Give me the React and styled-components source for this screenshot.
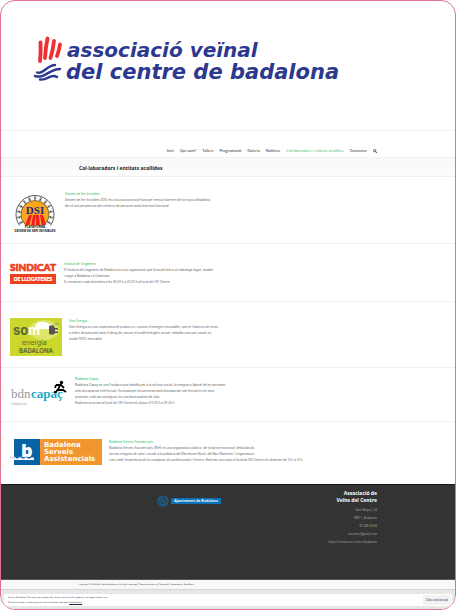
import React from "react";
import styled, { createGlobalStyle } from "styled-components";

const body = 'Inter, "Open Sans", sans-serif';
const sans = '"Open Sans", "Noto Sans", sans-serif';
const compact = 'Lato, "Open Sans", sans-serif';
const small = '"DejaVu Sans", sans-serif';

const GlobalStyle = createGlobalStyle`
  * { box-sizing: border-box; }
  body { margin: 0; background: #fff; font-family: ${sans}; }
  a { color: inherit; text-decoration: none; }
  h1, h2, h3, p, ul { margin: 0; padding: 0; }
  svg { display: block; }
`;

const Frame = styled.div`
  display: flex;
  flex-direction: column;
  min-height: 100vh;
  border: 1px solid #dc728b;
  border-radius: 15px;
  overflow: hidden;
  background: #fff;
`;

const Banner = styled.header`
  padding: 32px 30px 40px;
  border-bottom: 1px solid #f1f1f1;
`;

const BannerLogo = styled.svg`
  width: 320px;
  height: 57px;
  overflow: visible;
`;

const Container = styled.div`
  width: 100%;
  max-width: 298px;
  margin: 0 auto;
`;

const NavBar = styled.nav`
  padding: 17px 0 3px;
`;

const NavList = styled.ul`
  display: flex;
  justify-content: flex-end;
  align-items: center;
  gap: 6px;
  list-style: none;
  font-family: ${compact};
  font-size: 4px;
  line-height: 6px;
  white-space: nowrap;
`;

const NavLink = styled.a`
  display: block;
  color: ${(p) => (p.$active ? "#4fc986" : "#333")};
`;

const SearchButton = styled.button`
  display: block;
  padding: 0;
  border: 0;
  background: none;
  width: 4px;
  height: 4px;
`;

const TitleBar = styled.div`
  padding: 7px 0 4px;
  border-top: 1px solid #f2f2f2;
  border-bottom: 1px solid #eee;
  background: linear-gradient(#f8f8f8, #fdfdfd);
`;

const PageTitle = styled.h1`
  font-size: 5px;
  line-height: 7px;
  color: #222;
`;

const Entry = styled.article`
  display: flex;
  align-items: flex-start;
  gap: ${(p) => p.$gap}px;
  min-height: ${(p) => p.$height}px;
  padding: ${(p) => p.$top}px 9px 0 ${(p) => p.$left ?? 9}px;
  border-bottom: ${(p) => (p.$last ? "0" : "1px solid #f0f0f0")};
`;

const EntryLogo = styled.svg`
  flex: none;
  margin-top: ${(p) => p.$drop}px;
  overflow: visible;
`;

const EntryText = styled.div`
  font-family: ${body};
  font-size: 3px;
  line-height: 6px;
  color: #666;
  white-space: nowrap;
`;

const EntryTitle = styled.h2`
  font-size: 3px;
  line-height: 6px;
  font-weight: 400;
  color: #1fc067;
`;

const Footer = styled.footer`
  flex: 1;
  background: #333;
  border-top: 1px solid #161616;
  border-bottom: 1px solid #555;
`;

const FooterColumns = styled(Container)`
  display: flex;
  justify-content: space-between;
  padding-top: 5px;
`;

const CityLink = styled.a`
  display: flex;
  align-items: center;
  gap: 2px;
  height: 12px;
  margin: 5px 0 0 78px;
`;

const CityLabel = styled.span`
  padding: 0 3px;
  background: #0b74b8;
  color: #fff;
  font-family: ${compact};
  font-size: 4px;
  line-height: 6px;
  font-weight: 700;
  white-space: nowrap;
`;

const Address = styled.address`
  font-style: normal;
  text-align: right;
  font-size: 3px;
  line-height: 8px;
  color: #aaa;
`;

const FooterTitle = styled.h3`
  margin-bottom: 2px;
  font-size: 5px;
  line-height: 7px;
  color: #fff;
`;

const Copyright = styled.div`
  padding: 1px 0 2px;
  background: #f8f8f8;
  font-family: ${small};
  font-size: 2px;
  line-height: 6px;
  color: #333;
`;

const CookieArea = styled.aside`
  padding: 4px 3px 3px;
  border-top: 1px solid #d5d8d7;
  background: #e6e8e8;
`;

const CookieBox = styled.div`
  display: flex;
  align-items: center;
  justify-content: space-between;
  padding: 1px 1px 1px 4px;
  background: #fff;
  font-family: ${small};
  font-size: 2px;
  line-height: 5px;
  color: #224;
`;

const CookieLink = styled.a`
  text-decoration: underline;
`;

const AcceptButton = styled.button`
  padding: 0 3px;
  height: 10px;
  border: 0;
  border-radius: 1px;
  background: #f2f2f2;
  color: #345;
  font-family: ${compact};
  font-size: 3px;
  white-space: nowrap;
`;

function AssociationLogo() {
  return (
    <BannerLogo viewBox="31 33 320 57" role="img" aria-label="Associació Veïnal del Centre de Badalona">
      <g fill="none" stroke="#ee3035" strokeWidth="3.8" strokeLinecap="round">
        <path d="M40.5 42.500Q41 51 40 61" />
        <path d="M47.500 38.500Q45.500 48 45 58" />
        <path d="M54 41Q53 50 50.500 58" />
        <path d="M60 44.500Q59 51 57 56" />
      </g>
      <g fill="none" stroke="#2c398f" strokeWidth="2.400" strokeLinecap="round">
        <path d="M37 72.500C43 75 47 65 55 65" />
        <path d="M35 76C45 79 49 69 60 69" />
        <path d="M40 79.500C47 81 51 73 57 77" />
      </g>
      <g fill="#2c398f" fontFamily='"DejaVu Sans", sans-serif' fontStyle="italic" fontWeight="700">
        <text x="67" y="57" fontSize="20">associació veïnal</text>
        <text x="66" y="79" fontSize="21">del centre de badalona</text>
      </g>
    </BannerLogo>
  );
}

function DsiLogo() {
  const figures = Array.from({ length: 13 }, (_, i) => 150 + i * 20);
  return (
    <EntryLogo $drop={4} width="42" height="40" viewBox="0 0 42 40" role="img" aria-label="Plataforma Deixem de Ser Invisibles">
      <circle cx="21" cy="19.500" r="19" fill="#fff" stroke="#333" strokeWidth="0.8" />
      <g stroke="#333" strokeWidth="0.6" fill="none">
        {figures.map((a) => (
          <g key={a} transform={`rotate(${a + 90} 21 19.5) translate(21 2.3)`}>
            <circle r="0.7" />
            <path d="M0 0.800V2.400L-0.900 3.200M0 2.400L0.900 3.200M-1.200 1.500H1.200" />
          </g>
        ))}
      </g>
      <circle cx="21" cy="19.500" r="14" fill="#fba71c" stroke="#333" strokeWidth="0.6" />
      <path d="M11 30L15 20H18L15 32ZM17 32L19 20H22L20 33ZM22 33V20H25L26 32ZM28 32L26 20H29L32 30Z" fill="#e22" />
      <path d="M4 30.500H38V40H4Z" fill="#fff" />
      <text x="21" y="19" textAnchor="middle" fontFamily="Liberation Serif, serif" fontWeight="700" fontSize="11" fill="#202c8a">DSI</text>
      <g textAnchor="middle" fontFamily="Liberation Sans, sans-serif" fontWeight="700" fill="#111">
        <text x="21" y="33" fontSize="3">PLATAFORMA</text>
        <text x="21" y="37" fontSize="3">DEIXEM DE SER INVISIBLES</text>
      </g>
    </EntryLogo>
  );
}

function SindicatLogo() {
  return (
    <EntryLogo $drop={0} width="46" height="23" viewBox="0 0 46 23" role="img" aria-label="Sindicat de Llogateres">
      <path d="M0 13H46V23H0Z" fill="#ed401c" />
      <g textAnchor="middle" fontFamily="Lato, sans-serif" fontWeight="900">
        <text x="23" y="10" fontSize="10" fill="#ed401c" stroke="#ed401c" strokeWidth="0.7">SINDICAT</text>
        <text x="23" y="20" fontSize="5" fill="#fff" stroke="#fff" strokeWidth="0.2">DE LLOGATERES</text>
      </g>
    </EntryLogo>
  );
}

function SomEnergiaLogo() {
  return (
    <EntryLogo $drop={0} width="52" height="38" viewBox="0 0 52 38" role="img" aria-label="Som Energia Badalona">
      <path d="M0 0H52V38H0Z" fill="#cbd72b" />
      <ellipse cx="34" cy="12" rx="15" ry="10" fill="#dde66a" />
      <path d="M25 8Q27 3 35 4L42 7V12Q34 10 25 12Z" fill="#fff" />
      <path d="M39 8Q44 6 45 10L48 10V11.500H45V13.500H48V15H45Q44 18 39 16Z" fill="#555" />
      <path d="M43 8Q45 5 49 6" fill="none" stroke="#666" strokeWidth="0.6" />
      <g fontFamily="Inter, sans-serif" fill="#62673a">
        <text x="3" y="17" fontSize="13" fontWeight="700">
          so<tspan fill="#fff">m</tspan>
        </text>
        <text x="12" y="27" fontSize="7">energia</text>
        <text x="26" y="35" fontSize="6" fontWeight="700" textAnchor="middle">BADALONA</text>
      </g>
    </EntryLogo>
  );
}

function CapacLogo() {
  return (
    <EntryLogo $drop={5} width="57" height="24" viewBox="0 0 57 24" role="img" aria-label="Fundació bdn capaç">
      <g fontFamily="Liberation Serif, serif" fontSize="13">
        <text x="1" y="17" fill="#999">bdn</text>
        <text x="21" y="17" fontWeight="700" fill="#24a9c2">capaç</text>
      </g>
      <text x="1" y="24" fontFamily="DejaVu Sans, sans-serif" fontSize="3" fill="#999">FUNDACIÓ</text>
      <circle cx="51.500" cy="1.500" r="1.700" fill="#000" />
      <path d="M46 4L51 4L54 7M50 4L48 9L53 9L56 11M48 8L46 11H44M46 4L45 7" fill="none" stroke="#000" strokeWidth="1.800" />
    </EntryLogo>
  );
}

function BsaLogo() {
  return (
    <EntryLogo $drop={0} width="92" height="26" viewBox="0 0 92 26" role="img" aria-label="Badalona Serveis Assistencials">
      <path d="M4 0H30V26H4Z" fill="#0763a3" />
      <path d="M30 0H92V26H30Z" fill="#f29630" />
      <text x="11" y="18" fontFamily="Open Sans, sans-serif" fontWeight="800" fontSize="18" fill="#fff">b</text>
      <path d="M4 18Q7 21 10 18Q13 21 16 18Q19 21 22 18L24 19V21H4Z" fill="#fff" />
      <path d="M0 18L3 19L5 18L7 20L10 18L13 20L17 18" fill="none" stroke="#b8bbdf" strokeWidth="1" />
      <g fontFamily="DejaVu Sans, sans-serif" fontWeight="700" fontSize="7" fill="#fff">
        <text x="34" y="8">Badalona</text>
        <text x="34" y="15">Serveis</text>
        <text x="34" y="22">Assistencials</text>
      </g>
    </EntryLogo>
  );
}

const entries = [
  {
    Logo: DsiLogo, height: 67, top: 14, gap: 9, left: 13, title: "Deixem de Ser Invisibles",
    lines: [
      "Deixem de Ser Invisibles (DSI) és una associació que lluita per trencar barreres de tot tipus a Badalona,",
      "des d'una perspectiva del col·lectiu de persones amb diversitat funcional.",
    ],
  },
  {
    Logo: SindicatLogo, height: 58, top: 17, gap: 8, title: "Sindicat de Llogateres",
    lines: [
      "El Sindicat de Llogateres de Badalona és una organització que lluita pel dret a un habitatge digne, estable",
      "i segur a Badalona i a Catalunya.",
      "Es reuneixen cada divendres a les 18:00 h a 20:00 h al local de l'AV Centre.",
    ],
  },
  {
    Logo: SomEnergiaLogo, height: 66, top: 16, gap: 7, title: "Som Energia",
    lines: [
      "Som Energia és una cooperativa de producció i consum d'energies renovables, que té l'objectiu de reunir",
      "a milers de persones amb el desig de canviar el model energètic actual i treballar junts per assolir un",
      "model 100% renovable.",
    ],
  },
  {
    Logo: CapacLogo, height: 54, top: 8, gap: 8, title: "Badalona Capaç",
    lines: [
      "Badalona Capaç és una Fundació que treballa per a la inclusió social i la integració laboral de les persones",
      "amb discapacitat intel·lectual. Acompanyen les persones amb discapacitat intel·lectual en els seus",
      "projectes vitals per assegurar-los una bona qualitat de vida.",
      "Realitzen activitats al local de l'AV Centre els dijous d'11:30 h a 16:30 h.",
    ],
  },
  {
    Logo: BsaLogo, height: 62, top: 17, gap: 7, title: "Badalona Serveis Assistencials",
    lines: [
      "Badalona Serveis Assistencials (BSA) és una organització pública, de titularitat municipal, dedicada als",
      "serveis integrats de salut i socials a la població del Barcelonès Nord i del Baix Maresme. L'organització",
      "creix amb l'experiència de la ciutadania, els professionals i l'entorn. Realitzen activitats al local de l'AV Centre els dimecres de 12 h a 14 h.",
    ],
  },
];

const nav = ["Inici", "Qui som?", "Tallers", "Programació", "Galeria", "Notícies", "Col·laboradors i entitats acollides", "Contactar"];

export default function App() {
  return (
    <>
      <GlobalStyle />
      <Frame>
        <Banner><AssociationLogo /></Banner>
        <NavBar>
          <Container>
            <NavList>
              {nav.map((item) => (
                <li key={item}><NavLink href="#" $active={item.startsWith("Col")}>{item}</NavLink></li>
              ))}
              <li>
                <SearchButton aria-label="Cerca">
                  <svg width="4" height="4" viewBox="0 0 4 4" fill="none" stroke="#333" strokeWidth="0.8">
                    <circle cx="1.700" cy="1.700" r="1.200" />
                    <path d="M2.600 2.600L4 4" />
                  </svg>
                </SearchButton>
              </li>
            </NavList>
          </Container>
        </NavBar>
        <TitleBar>
          <Container><PageTitle>Col·laboradors i entitats acollides</PageTitle></Container>
        </TitleBar>
        <main>
          {entries.map(({ Logo, height, top, gap, left, title, lines }, i) => (
            <Entry key={title} $height={height} $top={top} $gap={gap} $left={left} $last={i === entries.length - 1}>
              <Logo />
              <EntryText>
                <EntryTitle><a href="#">{title}</a></EntryTitle>
                {lines.map((line) => <p key={line}>{line}</p>)}
              </EntryText>
            </Entry>
          ))}
        </main>
        <Footer>
          <FooterColumns>
            <CityLink href="#">
              <svg width="12" height="12" viewBox="0 0 12 12" fill="none" stroke="#17649a" aria-hidden="true">
                <circle cx="6" cy="6" r="5" strokeWidth="1.200" />
                <path d="M3 3H9V7Q9 9 6 10Q3 9 3 7ZM3 6H9M6 3V10M4 4L8 8" strokeWidth="0.8" />
              </svg>
              <CityLabel>Ajuntament de Badalona</CityLabel>
            </CityLink>
            <Address>
              <FooterTitle>Associació de<br />Veïns del Centre</FooterTitle>
              <p>Sant Miquel, 34</p>
              <p>08911, Badalona</p>
              <p>93 389 28 84</p>
              <p><a href="mailto:avcentre@gmail.com">avcentre@gmail.com</a></p>
              <p><a href="#">https://entitats.av.centre/badalona</a></p>
            </Address>
          </FooterColumns>
        </Footer>
        <Copyright>
          <Container>Copyright © 2024 AV Centre Badalona. All rights reserved. Theme Spacious by ThemeGrill. Powered by: WordPress.</Container>
        </Copyright>
        <CookieArea>
          <CookieBox>
            <div>
              <p>Privacy &amp; Cookies: This site uses cookies. By continuing to use this website, you agree to their use.</p>
              <p>To find out more, including how to control cookies, see here: <CookieLink href="#">Cookie Policy</CookieLink></p>
            </div>
            <AcceptButton>Close and accept</AcceptButton>
          </CookieBox>
        </CookieArea>
      </Frame>
    </>
  );
}
